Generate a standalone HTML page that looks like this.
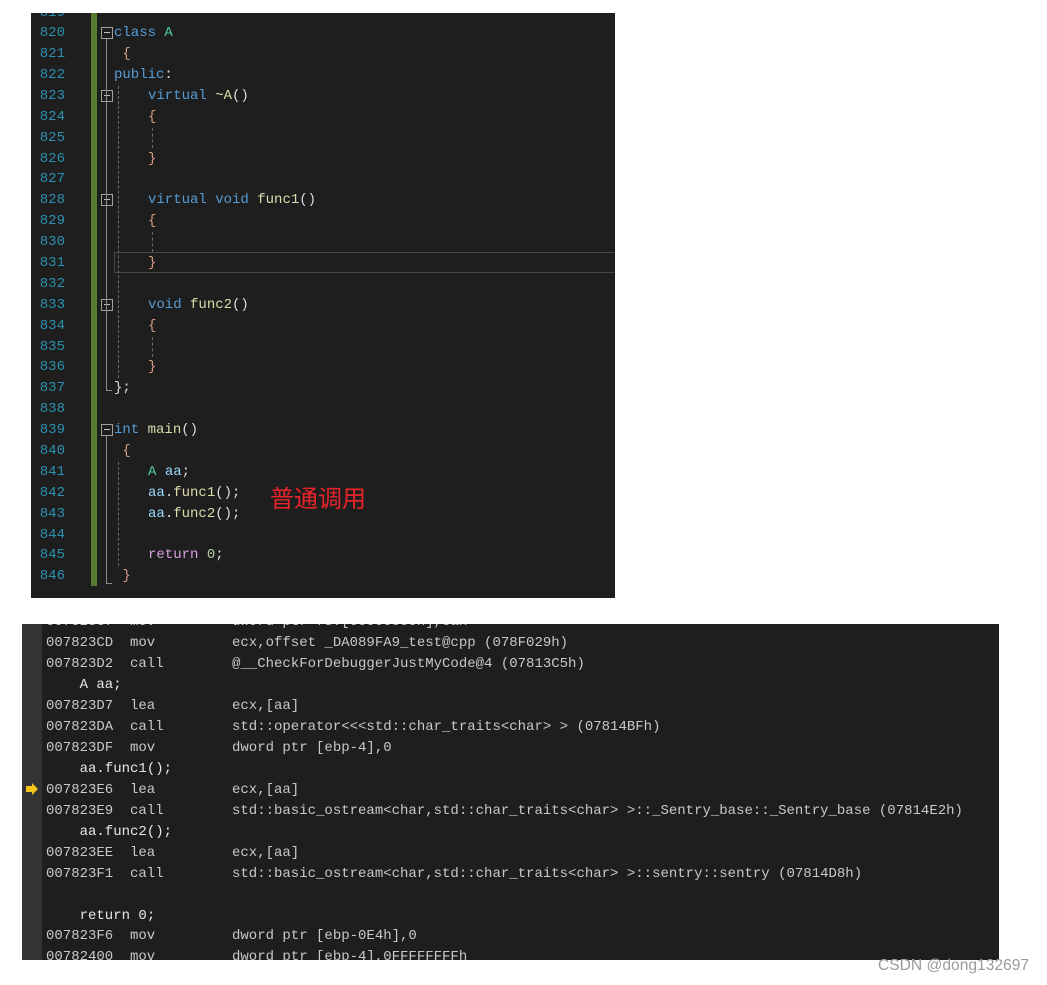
<!DOCTYPE html>
<html><head><meta charset="utf-8"><style>
body{margin:0;background:#fff;width:1047px;height:985px;position:relative;overflow:hidden;font-family:"Liberation Mono","Noto Sans CJK SC",monospace;}
.p{position:absolute;background:#1e1e1e;overflow:hidden}
.l{position:absolute;white-space:pre;font-size:14px;line-height:21px;height:21px}
.n{color:#2b91af;left:5px;width:29px;text-align:right}
.k{color:#569cd6}.t{color:#4ec9b0}.f{color:#dcdcaa}.b{color:#d69d85}.d{color:#dcdcdc}.v{color:#9cdcfe}.r{color:#d8a0df}.num{color:#b5cea8}
.box{position:absolute;width:10px;height:10px;border:1px solid #a0a0a0;left:70px}
.box:after{content:"";position:absolute;left:2px;top:4px;width:6px;height:1px;background:#c0c0c0}
.vl{position:absolute;width:1px;background:#8a8a8a}
.dl{position:absolute;width:0;border-left:1px dashed #6a6a6a}
.a{color:#c8c8c8}.s{color:#e8e8e8}
.r2{position:absolute;left:0;width:977px;height:21px}
.r2 span{position:absolute;white-space:pre;font-size:14px;line-height:21px;color:#c8c8c8}
.c1{left:24px}.c2{left:108px}.c3{left:210px}
</style></head><body>
<div class="p" style="left:31px;top:13px;width:584px;height:585px">
<div style="position:absolute;left:60px;top:0;width:6px;height:573px;background:#577a2f"></div>
<div style="position:absolute;left:83px;top:239px;width:501px;height:19px;border:1px solid #464646;border-right:none"></div>
<div class="l n" style="top:-10px">819</div>
<div class="l n" style="top:10px">820</div><div class="l n" style="top:31px">821</div><div class="l n" style="top:52px">822</div><div class="l n" style="top:73px">823</div><div class="l n" style="top:94px">824</div><div class="l n" style="top:115px">825</div><div class="l n" style="top:136px">826</div><div class="l n" style="top:156px">827</div><div class="l n" style="top:177px">828</div><div class="l n" style="top:198px">829</div><div class="l n" style="top:219px">830</div><div class="l n" style="top:240px">831</div><div class="l n" style="top:261px">832</div><div class="l n" style="top:282px">833</div><div class="l n" style="top:303px">834</div><div class="l n" style="top:324px">835</div><div class="l n" style="top:344px">836</div><div class="l n" style="top:365px">837</div><div class="l n" style="top:386px">838</div><div class="l n" style="top:407px">839</div><div class="l n" style="top:428px">840</div><div class="l n" style="top:449px">841</div><div class="l n" style="top:470px">842</div><div class="l n" style="top:491px">843</div><div class="l n" style="top:512px">844</div><div class="l n" style="top:532px">845</div><div class="l n" style="top:553px">846</div>
<div class="box" style="top:14px"></div><div class="box" style="top:77px"></div><div class="box" style="top:181px"></div><div class="box" style="top:286px"></div><div class="box" style="top:411px"></div>
<div class="vl" style="left:75px;top:26px;height:352px"></div>
<div style="position:absolute;left:75px;top:377px;width:6px;height:1px;background:#8a8a8a"></div>
<div class="vl" style="left:75px;top:423px;height:148px"></div>
<div style="position:absolute;left:75px;top:570px;width:6px;height:1px;background:#8a8a8a"></div>
<div class="dl" style="left:87px;top:73px;height:292px"></div>
<div class="dl" style="left:87px;top:449px;height:104px"></div>
<div class="dl" style="left:121px;top:115px;height:20px"></div>
<div class="dl" style="left:121px;top:219px;height:20px"></div>
<div class="dl" style="left:121px;top:324px;height:20px"></div>
<div class="l" style="left:83px;top:10px"><span class="k">class</span> <span class="t">A</span></div>
<div class="l b" style="left:83px;top:31px"> {</div>
<div class="l k" style="left:83px;top:52px">public<span class="d">:</span></div>
<div class="l" style="left:117px;top:73px"><span class="k">virtual</span> <span class="f">~A</span><span class="d">()</span></div>
<div class="l b" style="left:117px;top:94px">{</div>
<div class="l b" style="left:117px;top:136px">}</div>
<div class="l" style="left:117px;top:177px"><span class="k">virtual void</span> <span class="f">func1</span><span class="d">()</span></div>
<div class="l b" style="left:117px;top:198px">{</div>
<div class="l b" style="left:117px;top:240px">}</div>
<div class="l" style="left:117px;top:282px"><span class="k">void</span> <span class="f">func2</span><span class="d">()</span></div>
<div class="l b" style="left:117px;top:303px">{</div>
<div class="l b" style="left:117px;top:344px">}</div>
<div class="l d" style="left:83px;top:365px">};</div>
<div class="l" style="left:83px;top:407px"><span class="k">int</span> <span class="f">main</span><span class="d">()</span></div>
<div class="l b" style="left:83px;top:428px"> {</div>
<div class="l" style="left:117px;top:449px"><span class="t">A</span> <span class="v">aa</span><span class="d">;</span></div>
<div class="l" style="left:117px;top:470px"><span class="v">aa</span><span class="d">.</span><span class="f">func1</span><span class="d">();</span></div>
<div class="l" style="left:117px;top:491px"><span class="v">aa</span><span class="d">.</span><span class="f">func2</span><span class="d">();</span></div>
<div class="l" style="left:117px;top:532px"><span class="r">return</span> <span class="num">0</span><span class="d">;</span></div>
<div class="l b" style="left:83px;top:553px"> }</div>
<div style="position:absolute;left:239px;top:468px;font-family:'Noto Sans CJK SC',sans-serif;font-size:24px;color:#e8242a;line-height:32px">普通调用</div>
</div>
<div class="p" style="left:22px;top:624px;width:977px;height:336px">
<div style="position:absolute;left:0;top:0;width:20px;height:336px;background:#333"></div>
<svg style="position:absolute;left:3px;top:158px" width="14" height="14" viewBox="0 0 14 14"><path d="M1 4h6V1l6 6-6 6V10H1z" fill="#f5c518"/></svg>
<div class="r2" style="top:-12px"><span class="c1">007823C7</span><span class="c2">mov</span><span class="c3">dword ptr fs:[00000000h],eax</span></div>
<div class="r2" style="top:9px"><span class="c1">007823CD</span><span class="c2">mov</span><span class="c3">ecx,offset _DA089FA9_test@cpp (078F029h)</span></div>
<div class="r2" style="top:30px"><span class="c1">007823D2</span><span class="c2">call</span><span class="c3">@__CheckForDebuggerJustMyCode@4 (07813C5h)</span></div>
<div class="l s" style="left:24px;top:51px">    A aa;</div>
<div class="r2" style="top:72px"><span class="c1">007823D7</span><span class="c2">lea</span><span class="c3">ecx,[aa]</span></div>
<div class="r2" style="top:93px"><span class="c1">007823DA</span><span class="c2">call</span><span class="c3">std::operator&lt;&lt;&lt;std::char_traits&lt;char&gt; &gt; (07814BFh)</span></div>
<div class="r2" style="top:114px"><span class="c1">007823DF</span><span class="c2">mov</span><span class="c3">dword ptr [ebp-4],0</span></div>
<div class="l s" style="left:24px;top:135px">    aa.func1();</div>
<div class="r2" style="top:156px"><span class="c1">007823E6</span><span class="c2">lea</span><span class="c3">ecx,[aa]</span></div>
<div class="r2" style="top:177px"><span class="c1">007823E9</span><span class="c2">call</span><span class="c3">std::basic_ostream&lt;char,std::char_traits&lt;char&gt; &gt;::_Sentry_base::_Sentry_base (07814E2h)</span></div>
<div class="l s" style="left:24px;top:198px">    aa.func2();</div>
<div class="r2" style="top:219px"><span class="c1">007823EE</span><span class="c2">lea</span><span class="c3">ecx,[aa]</span></div>
<div class="r2" style="top:240px"><span class="c1">007823F1</span><span class="c2">call</span><span class="c3">std::basic_ostream&lt;char,std::char_traits&lt;char&gt; &gt;::sentry::sentry (07814D8h)</span></div>
<div class="l s" style="left:24px;top:282px">    return 0;</div>
<div class="r2" style="top:302px"><span class="c1">007823F6</span><span class="c2">mov</span><span class="c3">dword ptr [ebp-0E4h],0</span></div>
<div class="r2" style="top:323px"><span class="c1">00782400</span><span class="c2">mov</span><span class="c3">dword ptr [ebp-4],0FFFFFFFFh</span></div>
</div>
<div style="position:absolute;left:878px;top:957px;font-family:'Liberation Sans',sans-serif;font-size:15.6px;color:#9a9a9a">CSDN @dong132697</div>
</body></html>
